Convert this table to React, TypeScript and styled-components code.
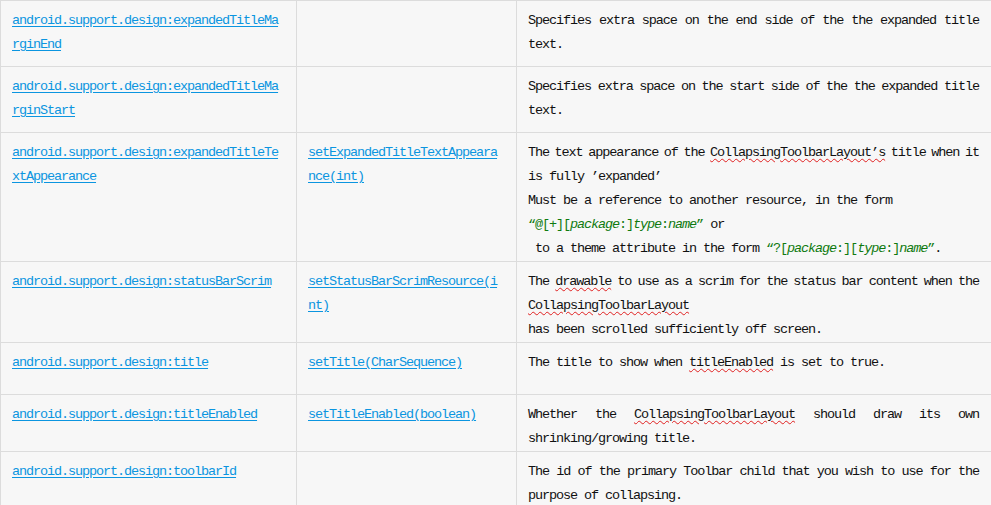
import styled, { createGlobalStyle } from "styled-components";
import React from "react";

const GlobalStyle = createGlobalStyle`
    html, body {
        margin: 0;
        padding: 0;
        background: #f7f7f7;
        overflow: hidden;
    }
`;

const Table = styled.table`
    border-collapse: separate;
    border-spacing: 0;
    table-layout: fixed;
    width: 996px;
    border-top: 1px solid #dcdcdc;
    border-left: 1px solid #dcdcdc;
    font-family: "Liberation Mono", "DejaVu Sans Mono", monospace;
    font-size: 13.5px;
    letter-spacing: -1.1px;
    line-height: 24px;
    color: #111;
`;

const Tr = styled.tr<{ $height: number }>`
    height: ${(p) => p.$height}px;
`;

const Cell = styled.td`
    box-sizing: border-box;
    vertical-align: top;
    padding: 8px 16px 0 11px;
    border-right: 1px solid #dcdcdc;
    border-bottom: 1px solid #dcdcdc;
    word-break: break-all;
`;

const Link = styled.a`
    color: #0b95e0;
    text-decoration: underline;
    text-underline-offset: 2px;
`;

const TextLine = styled.div<{ $justify?: boolean; $squeeze: number }>`
    white-space: pre-wrap;
    word-break: normal;
    text-align: ${(p) => (p.$justify ? "justify" : "left")};
    text-align-last: ${(p) => (p.$justify ? "justify" : "auto")};
    word-spacing: ${(p) => p.$squeeze}px;
`;

const Spell = styled.span`
    text-decoration: underline wavy #e02020;
    text-decoration-thickness: 1px;
    text-underline-offset: 2px;
`;

const Code = styled.span`
    color: #0f7a0f;

    em {
        font-style: italic;
    }
`;

type Line = {
    content: React.ReactNode;
    justify?: boolean;
    squeeze?: number;
};

type Row = {
    height: number;
    attr: string;
    method?: string;
    lines: Line[];
};

const rows: Row[] = [
    {
        height: 66,
        attr: "android.support.design:expandedTitleMarginEnd",
        lines: [
            { content: "Specifies extra space on the end side of the the expanded title", justify: true },
            { content: "text." },
        ],
    },
    {
        height: 66,
        attr: "android.support.design:expandedTitleMarginStart",
        lines: [
            { content: "Specifies extra space on the start side of the the expanded title", justify: true, squeeze: -0.5 },
            { content: "text." },
        ],
    },
    {
        height: 129,
        attr: "android.support.design:expandedTitleTextAppearance",
        method: "setExpandedTitleTextAppearance(int)",
        lines: [
            {
                content: (
                    <>
                        The text appearance of the <Spell>CollapsingToolbarLayout’s</Spell> title when it
                    </>
                ),
                justify: true,
                squeeze: -1.5,
            },
            { content: "is fully ’expanded’" },
            { content: "Must be a reference to another resource, in the form" },
            {
                content: (
                    <>
                        <Code>
                            “@[+][<em>package</em>:]<em>type</em>:<em>name</em>”
                        </Code>{" "}
                        or
                    </>
                ),
            },
            {
                content: (
                    <>
                        {" "}to a theme attribute in the form{" "}
                        <Code>
                            “?[<em>package</em>:][<em>type</em>:]<em>name</em>”
                        </Code>
                        .
                    </>
                ),
            },
        ],
    },
    {
        height: 81,
        attr: "android.support.design:statusBarScrim",
        method: "setStatusBarScrimResource(int)",
        lines: [
            {
                content: (
                    <>
                        The <Spell>drawable</Spell> to use as a scrim for the status bar content when the
                    </>
                ),
                justify: true,
                squeeze: -1,
            },
            { content: <Spell>CollapsingToolbarLayout</Spell> },
            { content: "has been scrolled sufficiently off screen." },
        ],
    },
    {
        height: 52,
        attr: "android.support.design:title",
        method: "setTitle(CharSequence)",
        lines: [
            {
                content: (
                    <>
                        The title to show when <Spell>titleEnabled</Spell> is set to true.
                    </>
                ),
            },
        ],
    },
    {
        height: 57,
        attr: "android.support.design:titleEnabled",
        method: "setTitleEnabled(boolean)",
        lines: [
            {
                content: (
                    <>
                        Whether the <Spell>CollapsingToolbarLayout</Spell> should draw its own
                    </>
                ),
                justify: true,
            },
            { content: "shrinking/growing title." },
        ],
    },
    {
        height: 70,
        attr: "android.support.design:toolbarId",
        lines: [
            { content: "The id of the primary Toolbar child that you wish to use for the", justify: true },
            { content: "purpose of collapsing." },
        ],
    },
];

export default function App() {
    return (
        <>
            <GlobalStyle />
            <Table>
                <colgroup>
                    <col style={{ width: 296 }} />
                    <col style={{ width: 220 }} />
                    <col style={{ width: 479 }} />
                </colgroup>
                <tbody>
                    {rows.map((row) => (
                        <Tr key={row.attr} $height={row.height}>
                            <Cell>
                                <Link href="#">{row.attr}</Link>
                            </Cell>
                            <Cell>{row.method && <Link href="#">{row.method}</Link>}</Cell>
                            <Cell>
                                {row.lines.map((line, i) => (
                                    <TextLine key={i} $justify={line.justify} $squeeze={line.squeeze ?? 0}>
                                        {line.content}
                                    </TextLine>
                                ))}
                            </Cell>
                        </Tr>
                    ))}
                </tbody>
            </Table>
        </>
    );
}
